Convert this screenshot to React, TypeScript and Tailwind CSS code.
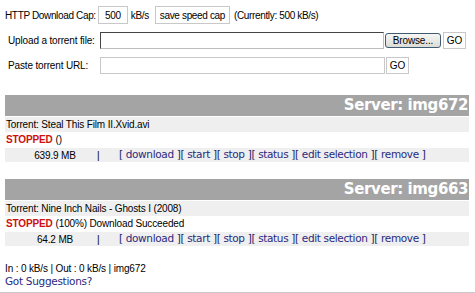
import React from 'react';

const tahoma = { fontFamily: 'Tahoma, "Liberation Sans", Arial, sans-serif' };

interface Torrent {
  server: string;
  name: string;
  status: string;
  size: string;
}

const torrents: Torrent[] = [
  { server: 'img672', name: 'Steal This Film II.Xvid.avi', status: '()', size: '639.9 MB' },
  { server: 'img663', name: 'Nine Inch Nails - Ghosts I (2008)', status: '(100%) Download Succeeded', size: '64.2 MB' },
];

const acciones = ['download', 'start', 'stop', 'status', 'edit selection', 'remove'];

function TorrentBlock({ t }: { t: Torrent }) {
  return (
    <div className="mx-[5px] w-[464px]">
      <div className="h-[21px] bg-[#a4a4a4] flex items-center justify-end pr-[1px]">
        <span className="text-white font-bold text-[15px] leading-none font-['DejaVu_Sans',sans-serif] tracking-[-0.4px]">
          Server: {t.server}
        </span>
      </div>
      <div className="h-[15px] mt-[1px] bg-[#efefef] flex items-center text-black pl-[1px]">
        Torrent: {t.name}
      </div>
      <div className="h-[15px] flex items-center text-black pl-[1px]">
        <span className="font-bold text-[#cc1111]">STOPPED</span>
        <span className="ml-[3px]">{t.status}</span>
      </div>
      <div className="h-[14px] mt-[1px] bg-[#efefef] flex items-center whitespace-nowrap">
        <span className="w-[92px] text-center text-black pl-[8px]">{t.size}</span>
        <span className="w-[22px] text-black">|</span>
        <span className="font-['DejaVu_Sans',sans-serif] text-[10.5px] tracking-[-0.35px] text-[#222266]">
          {acciones.map((a) => (
            <span key={a}>
              [ <span className="text-[#2a2a80]">{a}</span> ]
            </span>
          ))}
        </span>
      </div>
    </div>
  );
}

export default function App() {
  return (
    <div className="w-[475px] h-[293px] bg-white overflow-hidden text-[10px] tracking-[-0.15px] text-black" style={tahoma}>
      {/* controles */}
      <div className="pt-[6px] pl-[5px] flex items-center h-[24px] whitespace-nowrap tracking-[-0.35px]">
        <span className="mr-[2px]">HTTP Download Cap:</span>
        <div className="w-[30px] h-[18px] border border-[#c8c8c8] flex items-center justify-center">500</div>
        <span className="ml-[3px] mr-[6px]">kB/s</span>
        <div className="h-[18px] px-[4px] border border-[#c8c8c8] flex items-center">save speed cap</div>
        <span className="ml-[4px]">(Currently: 500 kB/s)</span>
      </div>
      <div className="mt-[8px] pl-[8px] flex items-center h-[17px] whitespace-nowrap">
        <span className="w-[92px] shrink-0">Upload a torrent file:</span>
        <div className="w-[284px] shrink-0 h-[17px] border border-[#bdbdbd] border-t-[#444] border-l-[#444]" />
        <div className="ml-[1px] w-[56px] shrink-0 h-[15px] rounded-[3px] border border-[#3f5a73] bg-gradient-to-b from-[#f6f6f4] to-[#dcdcd6] flex items-center justify-center">
          Browse...
        </div>
        <div className="ml-[2px] w-[23px] shrink-0 h-[17px] border border-[#c8c8c8] flex items-center justify-center">GO</div>
      </div>
      <div className="mt-[8px] pl-[8px] flex items-center h-[17px] whitespace-nowrap">
        <span className="w-[92px] shrink-0">Paste torrent URL:</span>
        <div className="w-[285px] shrink-0 h-[17px] border border-[#c8c8c8]" />
        <div className="ml-[1px] w-[23px] shrink-0 h-[17px] border border-[#c8c8c8] flex items-center justify-center">GO</div>
      </div>

      <div className="mt-[21px]">
        <TorrentBlock t={torrents[0]} />
      </div>
      <div className="mt-[17px]">
        <TorrentBlock t={torrents[1]} />
      </div>

      {/* pie */}
      <div className="mt-[16px] pl-[5px] leading-[13px]">
        <div>In : 0 kB/s | Out : 0 kB/s | img672</div>
        <div className="font-['DejaVu_Sans',sans-serif] text-[10.5px] text-[#2a2a80] tracking-[-0.3px]">Got Suggestions?</div>
      </div>
      <div className="mt-[4px] h-[2px] bg-[#c8c8c8]" />
    </div>
  );
}
